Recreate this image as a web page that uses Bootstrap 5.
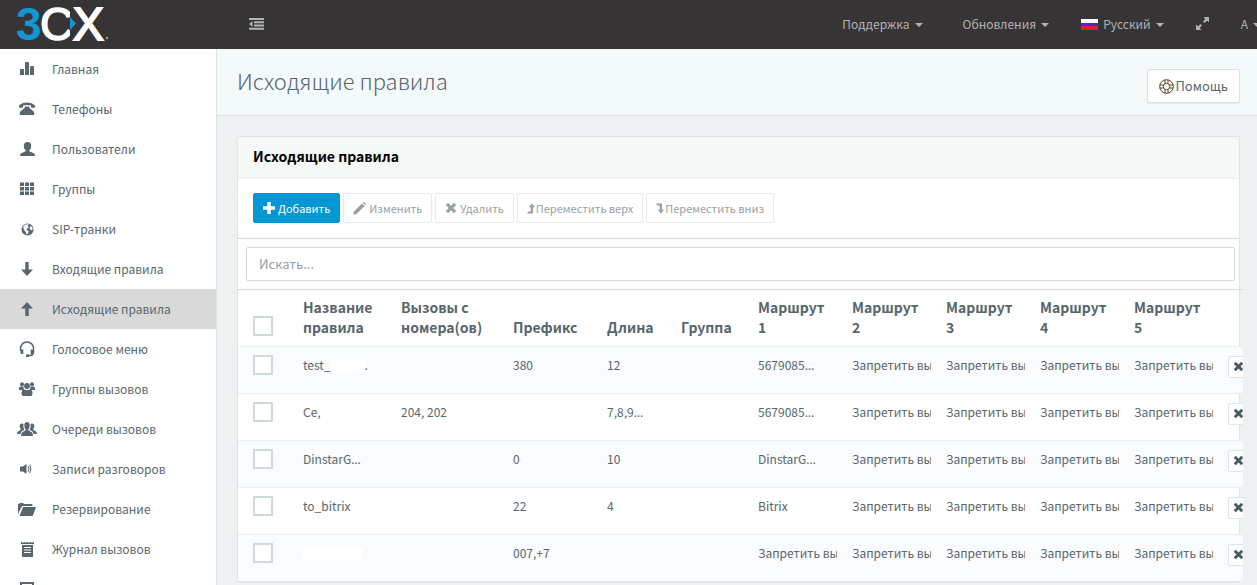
<!DOCTYPE html>
<html lang="ru">
<head>
<meta charset="utf-8">
<meta name="viewport" content="width=device-width, initial-scale=1">
<title>Исходящие правила</title>
<link href="https://cdn.jsdelivr.net/npm/bootstrap@5.3.0/dist/css/bootstrap.min.css" rel="stylesheet">
<style>
:root{--ink:#58666e;--line:#dee5e7;--blue:#0596d4}
body{font-family:"Noto Sans CJK SC","Noto Sans",sans-serif;font-size:12px;line-height:20px;color:var(--ink);background:#edf1f2}
svg{flex:none;fill:currentColor}
.topbar{height:49px;background:#373435;color:#b4b2b3;padding-bottom:2px}
.topbar a{color:inherit;text-decoration:none}
.brandbox{width:217px;padding-left:16px}
.menu-icon{margin-left:32px}
.topmenu{margin-right:-20px}
.topmenu a{display:flex;align-items:center;padding:0 16px;white-space:nowrap;gap:5px}
.tri{border:4px solid transparent;border-top-color:currentColor;border-bottom:0;margin-top:2px}
.flag{width:17px;height:11px;margin-top:2px;background:linear-gradient(#fff 33%,#3d33c4 33% 66%,#dd2127 66%)}
.side{width:217px;background:#fff;border-right:1px solid #dbe3e6}
.side a{display:flex;align-items:center;height:40px;color:var(--ink);text-decoration:none;flex:none;white-space:nowrap}
.side a.active{background:#d9d9d9}
.side .ico{width:54px;display:flex;justify-content:center;margin-right:-2px}
.titlebar{height:67px;background:#f4f9f9;border-bottom:1px solid #d9e2e5;padding:0 17px 0 20px}
.titlebar h1{font-size:22px;font-weight:300;line-height:32px;padding-bottom:4px}
.help{background:#fff;border:1px solid #d8e1e4;border-radius:2px;height:34px;padding:0 11px;gap:2px;font-size:13px;color:var(--ink);box-shadow:0 1px 1px rgba(90,90,90,.1);margin-top:8px}
.content{padding:20px 17px 0 20px}
.panelbox{border:1px solid var(--line);border-radius:2px;background:#fff;box-shadow:0 1px 1px rgba(0,0,0,.05)}
.panelhead{height:42px;background:#f6f8f8;border-bottom:1px solid #edf1f2;padding:0 15px 2px}
.panelhead h2{font-size:14px;font-weight:700;color:#000}
.tools{padding:14px 15px 15px;gap:3px;border-bottom:1px solid #d3dbde}
.tools .btn{font-size:11px;line-height:18px;height:30px;border-radius:2px;padding:0 9px;gap:3px;border-color:#e7ecee;background:#fff;color:#98a0a5;opacity:1}
.tools .btn.add{background:var(--blue);border-color:var(--blue);color:#fff}
.tools .btn.move{gap:1px}
.searchrow{padding:8px 4px 8px 8px}
.searchrow input{height:34px;font-size:13px;border:1px solid #cfdadd;border-radius:2px;padding:0 12px 2px}
.searchrow input::placeholder{color:#98a0a4}
.gridwrap{margin-right:-4px;overflow:hidden;border-top:1px solid #d3dbde}
.rules{table-layout:fixed;width:100%;margin:0}
.rules th,.rules td{padding:0 7px;color:var(--ink)}
.rules th{height:56px;font-size:14px;vertical-align:bottom;padding-bottom:9px}
.rules th input{margin-bottom:1px}
.rules tr>:first-child{padding-left:15px}
.rules td{height:47px;border-top:1px solid #eaeff0;vertical-align:top;padding-top:8px}
.rules tbody tr:nth-child(odd){background:#f9fbfd}
.rules .txt{display:block;overflow:hidden;white-space:nowrap;margin-right:1px}
.dots{font-family:"Noto Sans",sans-serif;line-height:1}
.rules tr>:last-child{overflow:hidden;padding-right:0}
.rules input{appearance:none;display:block;width:20px;height:20px;border:2px solid #cfdadd;background:#fff;margin:0}
.hid{display:inline-block;height:12px;background:#fff;vertical-align:middle}
.del{display:flex;align-items:center;width:30px;height:22px;margin-top:1px;background:#fff;border:1px solid #dee5e7;border-radius:2px;padding:0 4px;color:#4b5a62}
.wcheck{width:58px}.wname{width:98px}.wcall{width:112px}.wroute{width:94px}.wlen{width:74px}.wgrp{width:77px}.wdel{width:22px}
</style>
</head>
<body class="vh-100 overflow-hidden d-flex flex-column">
<svg class="d-none">
<symbol id="x" viewBox="0 0 12 12"><path d="M3 .8 6 3.8 9 .8 11.2 3 8.200 6l3 3L9 11.200l-3-3-3 3L.8 9l3-3-3-3z"/></symbol>
</svg>
<header class="topbar d-flex align-items-center overflow-hidden flex-shrink-0">
<a href="#" class="brandbox" aria-label="3CX"><svg width="95" height="46" viewBox="0 0 95 46" class="d-block" font-family="Liberation Sans"><text x="0" y="39" font-size="46" font-weight="700" fill="#1496d4">3</text><text x="24" y="39" font-size="46" fill="#fff" stroke="#fff" stroke-width="1.500">C</text><path d="M54 0h10v46H54z" fill="#373435"/><text x="57" y="39" font-size="46" fill="#fff" stroke="#fff" stroke-width="2">X</text><path d="M54 16v13l6-6.500z" fill="#1496d4"/><circle cx="91" cy="37" r="1.200" fill="#999"/></svg></a>
<a href="#" class="menu-icon" aria-label="Меню"><svg width="15" height="12" viewBox="0 0 15 12" class="d-block"><path d="M0 0h15v2H0zM5 3.300h10v2H5zM5 6.500h10v2H5zM0 9.800h15v2H0zM3.500 3v6L0 6z"/></svg></a>
<nav class="topmenu d-flex ms-auto">
<a href="#" class="me-2"><span>Поддержка</span><span class="tri"></span></a>
<a href="#"><span>Обновления</span><span class="tri"></span></a>
<a href="#"><span class="flag"></span><span>Русский</span><span class="tri"></span></a>
<a href="#" aria-label="Во весь экран"><svg width="13" height="13" viewBox="0 0 13 13"><path d="M7.500 0H13v5.500L11 3.600 8.600 6 7 4.400 9.400 2zM5.500 13H0V7.500l2 1.900L4.400 7 6 8.600 3.600 11z"/></svg></a>
<a href="#"><span>A</span><span class="tri"></span></a>
</nav>
</header>
<div class="d-flex flex-grow-1 overflow-hidden">
<nav class="side d-flex flex-column flex-shrink-0 overflow-hidden">
<a href="#"><span class="ico"><svg width="14" height="14" viewBox="0 0 14 14"><path d="M1 7h2.500q.5 0 .5.500V13H0V8q0-1 1-1zM6 0h2q1 0 1 1v12H5V1q0-1 1-1zM11 4h2q1 0 1 1v8h-4V5q0-1 1-1z"/></svg></span>Главная</a>
<a href="#"><span class="ico"><svg width="16" height="14" viewBox="0 0 16 14"><path d="M0 5V3.500Q3 .5 8 .5t8 3V5q0 .8-.6.8h-2.600q-.8 0-.8-.8V3.600Q8 2.600 4 3.600V5q0 .8-.8.8H.6Q0 5.800 0 5zM6 4.500h4l.6 1.500 4 3.500q.6.500.6 1.300V13H.8v-2.200q0-.8.6-1.300L5.400 6z"/></svg></span>Телефоны</a>
<a href="#"><span class="ico"><svg width="15" height="14" viewBox="0 0 15 14"><path d="M7.500 0c2.400 0 3.700 1.600 3.700 4 0 2-.8 3.600-1.900 4.300v1l4.500 2q1.200.6 1.200 2.700H0q0-2.100 1.200-2.700l4.500-2v-1C4.600 7.600 3.800 6 3.800 4c0-2.400 1.300-4 3.700-4z"/></svg></span>Пользователи</a>
<a href="#"><span class="ico"><svg width="14" height="14" viewBox="0 0 14 14"><path d="M0 .5h4v3.500H0zM5 .5h4v3.500H5zM10 .5h4v3.500h-4zM0 5h4v3.500H0zM5 5h4v3.500H5zM10 5h4v3.500h-4zM0 9.500h4V13H0zM5 9.500h4V13H5zM10 9.500h4V13h-4z"/></svg></span>Группы</a>
<a href="#"><span class="ico"><svg width="13" height="13" viewBox="0 0 13 13"><circle cx="6.500" cy="6.500" r="6"/><path fill="#fff" d="M2 3.500 4.500 1.500 8 1.200 6.500 3 8 4.200 6.300 5.200 5.500 7 7.600 8 7 10.500 5.500 11.500 4.800 9 3 7zM9 3l2 1 .8 2-1.600 1.500L8.800 6z"/></svg></span>SIP-транки</a>
<a href="#"><span class="ico"><svg width="12" height="14" viewBox="0 0 12 14"><path d="M4.300 0h3.400v7.500H12L6 14 0 7.500h4.300z"/></svg></span>Входящие правила</a>
<a href="#" class="active" aria-current="page"><span class="ico"><svg width="12" height="14" viewBox="0 0 12 14"><path d="M4.300 14h3.400V6.500H12L6 0 0 6.500h4.300z"/></svg></span>Исходящие правила</a>
<a href="#"><span class="ico"><svg width="16" height="16" viewBox="0 0 16 16"><path fill="none" stroke="currentColor" stroke-width="1.500" d="M1.500 10V7.500a6.500 6.500 0 0 1 13 0V11q0 3.500-4 3.500H8"/><path d="M2.300 8.500h2V13h-1q-1.500 0-2-1.500zM11.700 8.500h2l.8 3q-.5 1.500-1.800 1.500h-1zM7 13.500h3V16H7z"/></svg></span>Голосовое меню</a>
<a href="#"><span class="ico"><svg width="16" height="14" viewBox="0 0 16 14"><circle cx="3" cy="2.200" r="2"/><circle cx="13" cy="2.200" r="2"/><circle cx="8" cy="4" r="2.900"/><path d="M0 8V6q0-1.500 1.500-1.500h3Q4.500 6.500 5 7.500L3.500 8zM16 8V6q0-1.500-1.500-1.500h-3Q11.500 6.500 11 7.500l1.500.5zM5 7.500q3 1.500 6 0 2.500 0 2.500 4 0 2.500-2 2.500h-7q-2 0-2-2.500 0-4 2.500-4z"/></svg></span>Группы вызовов</a>
<a href="#"><span class="ico"><svg width="20" height="14" viewBox="0 0 20 14"><path d="M10 0q2.700 0 2.700 3.500 0 2.500-1.400 3.800v1l3.300 2q1.400.7 1.400 3.700H4q0-3 1.400-3.700l3.300-2v-1Q7.300 6 7.300 3.500 7.300 0 10 0zM5 1.500q1 0 1.500.5-.8 3.300.9 5.700L4.500 9.500 3.300 12H0q0-2 1-2.600l2.800-1.600V7Q2.700 6 2.700 4.200 2.700 1.500 5 1.500zM15 1.500q-1 0-1.500.5.8 3.300-.9 5.700l2.900 1.800 1.200 2.500H20q0-2-1-2.600l-2.800-1.600V7q1.100-1 1.100-2.800 0-2.700-2.300-2.700z"/></svg></span>Очереди вызовов</a>
<a href="#"><span class="ico"><svg width="15" height="10" viewBox="0 0 15 10"><path d="M0 2.500h3L6.500 0v10L3 7.500H0z"/><path fill="none" stroke="currentColor" d="M8 2.200q2 2.800 0 5.600M9.500 .8q3 4.200 0 8.400"/></svg></span>Записи разговоров</a>
<a href="#"><span class="ico"><svg width="18" height="13" viewBox="0 0 18 13"><path d="M0 11V1.500Q0 .8.8.8L2.300 0H5l1 1h7.500q1 0 1 1v1H4zM5 4h13l-3 8.300q-.3.700-1 .7H1.500z"/></svg></span>Резервирование</a>
<a href="#"><span class="ico"><svg width="13" height="15" viewBox="0 0 13 15"><path fill-rule="evenodd" d="M0 0h1l1 1 1-1h1l1 1 1-1h1l1 1 1-1h1l1 1 1-1h1v2H0zM1 3h11v12H1zM3 5v1h7V5zM3 7.500v1h7v-1zM3 10v1h7v-1z"/></svg></span>Журнал вызовов</a>
<a href="#" aria-label="Отчёты"><span class="ico"><svg width="14" height="14" viewBox="0 0 14 14"><path fill="none" stroke="currentColor" stroke-width="2" d="M1 1h12v9H1z"/></svg></span></a>
</nav>
<main class="flex-grow-1 overflow-hidden">
<div class="titlebar d-flex justify-content-between align-items-center">
<h1 class="mb-0">Исходящие правила</h1>
<button type="button" class="help btn d-flex align-items-center"><svg width="15" height="15" viewBox="0 0 15 15" stroke="#51461f" style="fill:none"><circle cx="7.500" cy="7.500" r="6.800"/><circle cx="7.500" cy="7.500" r="3.200"/><path d="M6 .8v3.700M9 .8v3.700M6 10.500v3.700M9 10.500v3.700M.8 6h3.700M.8 9h3.700M10.500 6h3.700M10.500 9h3.700"/></svg><span>Помощь</span></button>
</div>
<div class="content">
<section class="panelbox">
<div class="panelhead d-flex align-items-center"><h2 class="mb-0">Исходящие правила</h2></div>
<div class="tools d-flex">
<button type="button" class="add btn d-flex align-items-center"><svg width="12" height="12" viewBox="0 0 12 12"><path d="M4.300 0h3.400v4.300H12v3.400H7.700V12H4.300V7.700H0V4.300h4.300z"/></svg><span>Добавить</span></button>
<button type="button" class="btn d-flex align-items-center" disabled><svg width="13" height="13" viewBox="0 0 13 13"><path d="M0 13l1.200-3.800L9 1.400 11.600 4 3.800 11.800zM9.700.8q1-1.200 2.200-.2 1.500 1.300.4 2.600z"/></svg><span>Изменить</span></button>
<button type="button" class="btn d-flex align-items-center" disabled><svg width="12" height="12"><use href="#x"/></svg><span>Удалить</span></button>
<button type="button" class="move btn d-flex align-items-center" disabled><svg width="8" height="11" viewBox="0 0 9 11"><path d="M5.500 0 9 4H6.800v7H0l1.500-2h2.700V4H2z"/></svg><span>Переместить верх</span></button>
<button type="button" class="move btn d-flex align-items-center" disabled><svg width="8" height="11" viewBox="0 0 9 11"><path d="M5.500 11 9 7H6.800V0H0l1.500 2h2.700v5H2z"/></svg><span>Переместить вниз</span></button>
</div>
<div class="searchrow"><input type="text" class="form-control" placeholder="Искать..." aria-label="Искать"></div>
<div class="gridwrap">
<table class="rules">
<colgroup><col class="wcheck"><col class="wname"><col class="wcall"><col class="wroute"><col class="wlen"><col class="wgrp"><col class="wroute"><col class="wroute"><col class="wroute"><col class="wroute"><col class="wroute"><col class="wdel"></colgroup>
<thead><tr><th><input type="checkbox" aria-label="Выбрать все"></th><th>Название правила</th><th>Вызовы с номера(ов)</th><th>Префикс</th><th>Длина</th><th>Группа</th><th>Маршрут<br>1</th><th>Маршрут<br>2</th><th>Маршрут<br>3</th><th>Маршрут<br>4</th><th>Маршрут<br>5</th><th></th></tr></thead>
<tbody id="rows"></tbody>
</table>
</div>
</section>
</div>
</main>
</div>
<script src="https://cdn.jsdelivr.net/npm/bootstrap@5.3.0/dist/js/bootstrap.bundle.min.js"></script>
<script>
const block='Запретить вызов', dots='<span class="dots">…</span>';
const rules=[
['test_<span class="hid" style="width:34px"></span>.','','380','12','','5679085'+dots],
['Ce,','204, 202','','7,8,9'+dots,'','5679085'+dots],
['DinstarG'+dots,'','0','10','','DinstarG'+dots],
['to_bitrix','','22','4','','Bitrix'],
['<span class="hid" style="width:60px"></span>','','007,+7','','',block]];
document.getElementById('rows').innerHTML=rules.map((r,i)=>'<tr><td><input type="checkbox" aria-label="Правило '+(i+1)+'"></td>'+
[...r,block,block,block,block].map(c=>'<td><span class="txt">'+c+'</span></td>').join('')+
'<td><button type="button" class="del" aria-label="Удалить"><svg width="11" height="11"><use href="#x"/></svg></button></td></tr>').join('');
</script>
</body>
</html>
